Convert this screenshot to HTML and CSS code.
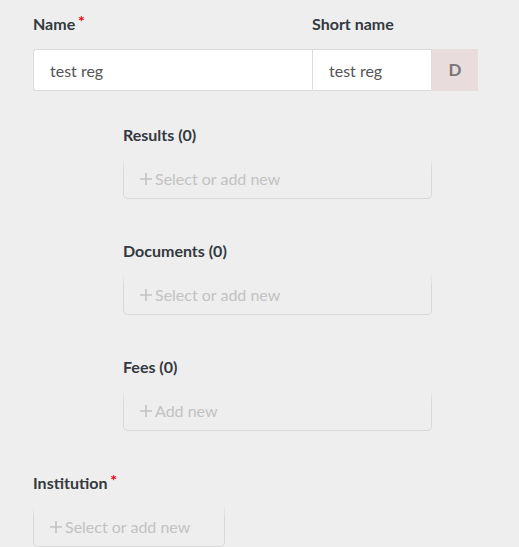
FILE: index.html
```html
<!DOCTYPE html>
<html lang="en">
<head>
    <meta charset="UTF-8">
    <meta name="viewport" content="width=device-width, initial-scale=1.0">
    <title>Registration</title>
    <link rel="stylesheet" href="styles.css">
</head>
<body>

<div class="form">
    <!-- Name and short name -->
    <div class="row">
        <div class="field field-name">
            <label class="label">Name <span class="req">*</span></label>
            <input class="text-input name-input" type="text" value="test reg">
        </div>
        <div class="field field-short">
            <label class="label">Short name</label>
            <div class="short-wrap">
                <input class="text-input short-input" type="text" value="test reg">
                <span class="badge">D</span>
            </div>
        </div>
    </div>

    <!-- Related lists -->
    <div class="sub">
        <div class="section">
            <div class="label">Results (0)</div>
            <div class="picker wide">
                <svg class="plus" viewBox="0 0 12 12"><path d="M6 0v12M0 6h12"/></svg>Select or add new
            </div>
        </div>
        <div class="section">
            <div class="label">Documents (0)</div>
            <div class="picker wide">
                <svg class="plus" viewBox="0 0 12 12"><path d="M6 0v12M0 6h12"/></svg>Select or add new
            </div>
        </div>
        <div class="section">
            <div class="label">Fees (0)</div>
            <div class="picker wide">
                <svg class="plus" viewBox="0 0 12 12"><path d="M6 0v12M0 6h12"/></svg>Add new
            </div>
        </div>
    </div>

    <div class="section last">
        <div class="label">Institution <span class="req">*</span></div>
        <div class="picker narrow">
            <svg class="plus" viewBox="0 0 12 12"><path d="M6 0v12M0 6h12"/></svg>Select or add new
        </div>
    </div>
</div>

</body>
</html>
```

FILE: styles.css
```css
body {
    margin: 0;
    background: #eeeeee;
    font-family: Lato, "Open Sans", sans-serif;
    color: #33393e;
}
.form {
    padding: 14px 0 0 33px;
}
.row {
    display: flex;
    width: 445px;
}
.field-name {
    width: 279px;
}
.field-short {
    width: 166px;
}
.label {
    display: block;
    font-size: 16px;
    line-height: 20px;
    font-weight: bold;
    margin-bottom: 15px;
}
.req {
    color: #f0000f;
    font-size: 16px;
    vertical-align: top;
    position: relative;
    top: -3px;
    margin-left: -1px;
}
.text-input {
    box-sizing: border-box;
    height: 42px;
    border: 1px solid #dcdcdc;
    background: #fff;
    font-family: inherit;
    font-size: 16px;
    color: #555;
    outline: none;
    margin: 0;
}
.name-input {
    width: 100%;
    padding: 0 16px;
    border-radius: 3px 0 0 3px;
    border-right: none;
}
.short-wrap {
    display: flex;
}
.short-input {
    width: 120px;
    padding: 0 16px;
}
.badge {
    width: 46px;
    height: 42px;
    line-height: 42px;
    text-align: center;
    background: #e9dcdd;
    color: #7a7476;
    font-size: 17px;
    font-weight: bold;
}
.sub {
    padding-left: 90px;
    margin-top: 34px;
}
.section {
    margin-bottom: 42px;
}
.section.last {
    margin-bottom: 0;
}
.section .label {
    margin-bottom: 12px;
}
.picker {
    position: relative;
    box-sizing: border-box;
    height: 42px;
    padding: 0 16px;
    display: flex;
    align-items: center;
    padding-top: 2px;
    border: 1px solid #d8d8d8;
    border-top: none;
    border-radius: 0 0 5px 5px;
    color: #c2c2c2;
    font-size: 16px;
}
/* fade the side borders into the background at the top */
.picker::before {
    content: "";
    position: absolute;
    top: 0;
    left: -1px;
    right: -1px;
    height: 14px;
    background: linear-gradient(#eeeeee, rgba(238, 238, 238, 0));
}
.plus {
    width: 12px;
    height: 12px;
    margin-right: 3px;
    stroke: #c2c2c2;
    stroke-width: 1.6;
    fill: none;
}
.wide {
    width: 309px;
}
.narrow {
    width: 192px;
}
```
